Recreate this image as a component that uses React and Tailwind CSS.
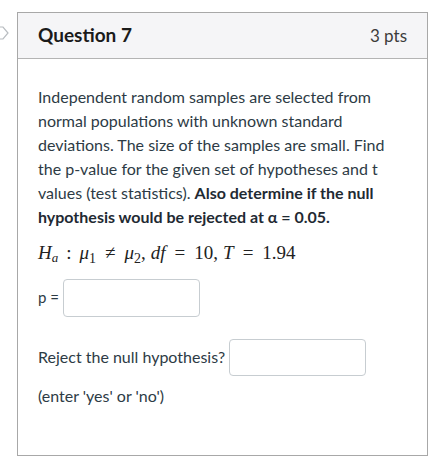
import React from 'react';

export default function App() {
  return (
    <div className="relative w-[442px] h-[476px] bg-white" style={{ fontFamily: 'Lato, "Open Sans", sans-serif' }}>
      <svg className="absolute left-0 top-[26px]" width="9" height="14" viewBox="0 0 9 14">
        <path d="M-2 1 L3 1 L8 7 L3 13 L-2 13" fill="none" stroke="#b8bcc0" strokeWidth="1.2" />
      </svg>
      <div className="ml-[17px] pt-[12px] w-[411px]">
        <div className="border border-[#a8a8a8] h-[444px] flex flex-col">
          <div className="h-[46px] bg-[#f5f5f7] border-b border-[#b4b4b4] flex items-center justify-between pl-[20px] pr-[20px]">
            <span className="text-[19px] font-bold text-[#1b1b1b]">Question 7</span>
            <span className="text-[17px] text-[#3c3c3c]">3 pts</span>
          </div>
          <div className="pl-[20px] pr-[16px] pt-[26px] text-[#2d3b45]">
            <p className="text-[16px] leading-[24px]">
              Independent random samples are selected from normal populations with unknown standard deviations. The size of the samples are small. Find the p-value for the given set of hypotheses and t values (test statistics). <b className="font-bold text-[#1f2a33]">Also determine if the null hypothesis would be rejected at α = 0.05.</b>
            </p>
            <div className="mt-[10px] text-[19px] text-[#222] whitespace-nowrap" style={{ fontFamily: '"Liberation Serif", "DejaVu Serif", serif' }}>
              <i>H</i><sub className="text-[13px] italic">a</sub>
              <span className="mx-[8px]">:</span>
              <i>μ</i><sub className="text-[14px]">1</sub>
              <span className="mx-[9px]">≠</span>
              <i>μ</i><sub className="text-[14px]">2</sub>
              <span className="mr-[5px]">,</span>
              <i>df</i>
              <span className="mx-[9px]">=</span>
              <span>10</span>
              <span className="mr-[5px]">,</span>
              <i>T</i>
              <span className="mx-[9px]">=</span>
              <span>1.94</span>
            </div>
            <div className="mt-[11px] flex items-center gap-[4px]">
              <span className="text-[15px] text-[#2d3b45]">p =</span>
              <div className="w-[137px] h-[38px] border border-[#c7cdd1] rounded-[4px] bg-white" />
            </div>
            <div className="mt-[22px] flex items-center gap-[4px]">
              <span className="text-[16px] text-[#2d3b45]">Reject the null hypothesis?</span>
              <div className="w-[137px] h-[37px] border border-[#c7cdd1] rounded-[4px] bg-white" />
            </div>
            <div className="mt-[8px] text-[16px] text-[#2d3b45]">(enter 'yes' or 'no')</div>
          </div>
        </div>
      </div>
    </div>
  );
}
